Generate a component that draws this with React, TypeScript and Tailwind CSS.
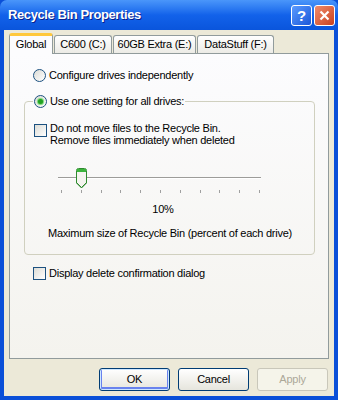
const font = "font-['Liberation_Sans',Arial,sans-serif]";

const Radio = ({ checked }: { checked?: boolean }) => (
  <span className="w-[13px] h-[13px] shrink-0 rounded-full border border-[#1c5180] bg-gradient-to-br from-[#dcdcd6] to-white flex items-center justify-center">
    {checked && <span className="w-[5px] h-[5px] rounded-full bg-[#21a121] shadow-[0_0_1px_1px_#6fd56f]" />}
  </span>
);

const Check = () => (
  <span className="w-[13px] h-[13px] shrink-0 border border-[#1c5180] bg-gradient-to-br from-[#dcdcd6] to-white" />
);

const tabs = [
  { label: "Global", w: "w-[44px]", active: true },
  { label: "C600 (C:)", w: "w-[58px]" },
  { label: "60GB Extra (E:)", w: "w-[83px]" },
  { label: "DataStuff (F:)", w: "w-[77px]" },
];

const Thumb = () => (
  <svg width="11" height="21" viewBox="0 0 11 21" className="absolute left-[18px] top-[-1px]">
    <path d="M0.5 2.5 Q0.5 0.5 2.5 0.5 H8.5 Q10.5 0.5 10.5 2.5 V15 L5.5 20 L0.5 15 Z" fill="#f4f4ef" stroke="#2f8a2f" />
    <rect x="1" y="1" width="9" height="3" fill="#3cb43c" />
    <path d="M1 15 L5.5 19.5 L10 15" fill="none" stroke="#2f8a2f" strokeWidth="1" />
  </svg>
);

const Button = ({ label, primary, disabled }: { label: string; primary?: boolean; disabled?: boolean }) => (
  <div
    className={`w-[71px] h-[23px] rounded-[3px] border flex items-center justify-center text-[11px] ${
      disabled
        ? "border-[#c9c7ba] bg-[#f5f4ea] text-[#aca899]"
        : "border-[#003c74] bg-gradient-to-b from-white to-[#e6e5dd] text-black"
    } ${primary ? "shadow-[inset_0_0_0_1px_#cee7ff,inset_0_-1px_0_2px_#6982ee]" : ""}`}
  >
    {label}
  </div>
);

export default function App() {
  return (
    <div className={`w-[338px] h-[400px] bg-[#0a4fd8] flex flex-col tracking-[-0.25px] ${font}`}>
      {/* title bar */}
      <div className="h-[30px] shrink-0 rounded-t-[7px] bg-gradient-to-b from-[#4a96fa] via-[#1262ea] to-[#0a55dc] flex items-center pl-[8px] pr-[3px]">
        <span className="text-white font-bold text-[13px] tracking-[-0.4px] [text-shadow:1px_1px_0_#0a1f8a]">
          Recycle Bin Properties
        </span>
        <div className="ml-auto flex gap-[2px]">
          <div className="w-[21px] h-[21px] rounded-[3px] border border-white bg-gradient-to-br from-[#5b9bff] to-[#1a55d8] flex items-center justify-center text-white font-bold text-[15px] leading-none">
            ?
          </div>
          <div className="w-[21px] h-[21px] rounded-[3px] border border-white bg-gradient-to-br from-[#f08a6a] to-[#c8401c] flex items-center justify-center">
            <svg width="11" height="11" viewBox="0 0 11 11">
              <path d="M1.5 1.5 L9.5 9.5 M9.5 1.5 L1.5 9.5" stroke="white" strokeWidth="2.2" />
            </svg>
          </div>
        </div>
      </div>

      {/* body */}
      <div className="flex-1 mx-[4px] mb-[4px] bg-[#ece9d8] flex flex-col px-[5px] pt-[3px]">
        <div className="flex items-end h-[20px]">
          {tabs.map((t) => (
            <div
              key={t.label}
              className={`${t.w} shrink-0 flex items-center justify-center text-[11px] text-black border border-b-0 border-[#919b9c] rounded-t-[3px] ${
                t.active
                  ? "h-[21px] -mb-px relative z-10 bg-[#fcfcfe] border-t-[3px] border-t-[#ffc83c] pb-[1px]"
                  : "h-[18px] ml-[1px] bg-gradient-to-b from-white to-[#ecebe6]"
              }`}
            >
              {t.label}
            </div>
          ))}
        </div>

        <div className="h-[306px] shrink-0 border border-[#919b9c] bg-gradient-to-b from-[#fcfcfe] to-[#f4f3ee] text-[11px] text-black pt-[15px] pl-[14px] pr-[13px]">
          <div className="flex items-center gap-[3px] pl-[9px] h-[13px]">
            <Radio />
            <span>Configure drives independently</span>
          </div>

          <fieldset className="mt-[11px] border border-[#d0d0bf] rounded-[4px] h-[162px] px-[7px]">
            <legend className="flex items-center gap-[3px] px-[1px] ml-[1px]">
              <Radio checked />
              <span>Use one setting for all drives:</span>
            </legend>

            <div className="flex items-start gap-[3px] mt-[14px] pl-[2px]">
              <Check />
              <div className="leading-[12px] -mt-[2px]">
                <div>Do not move files to the Recycle Bin.</div>
                <div>Remove files immediately when deleted</div>
              </div>
            </div>

            <div className="relative ml-[26px] w-[203px] h-[27px] mt-[23px]">
              <div className="absolute left-0 right-0 top-[8px] h-[2px] border-t border-[#9d9c99] border-b border-b-white bg-[#d6d3ce]" />
              <Thumb />
              <div className="absolute left-[3px] right-[1px] top-[21px] flex justify-between">
                {Array.from({ length: 11 }).map((_, i) => (
                  <span key={i} className="w-px h-[3px] bg-[#a0a0a0]" />
                ))}
              </div>
            </div>

            <div className="text-center w-[262px] mt-[5px]">10%</div>
            <div className="mt-[8px] pl-[16px]">Maximum size of Recycle Bin (percent of each drive)</div>
          </fieldset>

          <div className="flex items-center gap-[3px] pl-[9px] mt-[12px] h-[13px]">
            <Check />
            <span>Display delete confirmation dialog</span>
          </div>
        </div>

        <div className="flex justify-end gap-[8px] mt-[9px] pr-[1px]">
          <Button label="OK" primary />
          <Button label="Cancel" />
          <Button label="Apply" disabled />
        </div>
      </div>
    </div>
  );
}
